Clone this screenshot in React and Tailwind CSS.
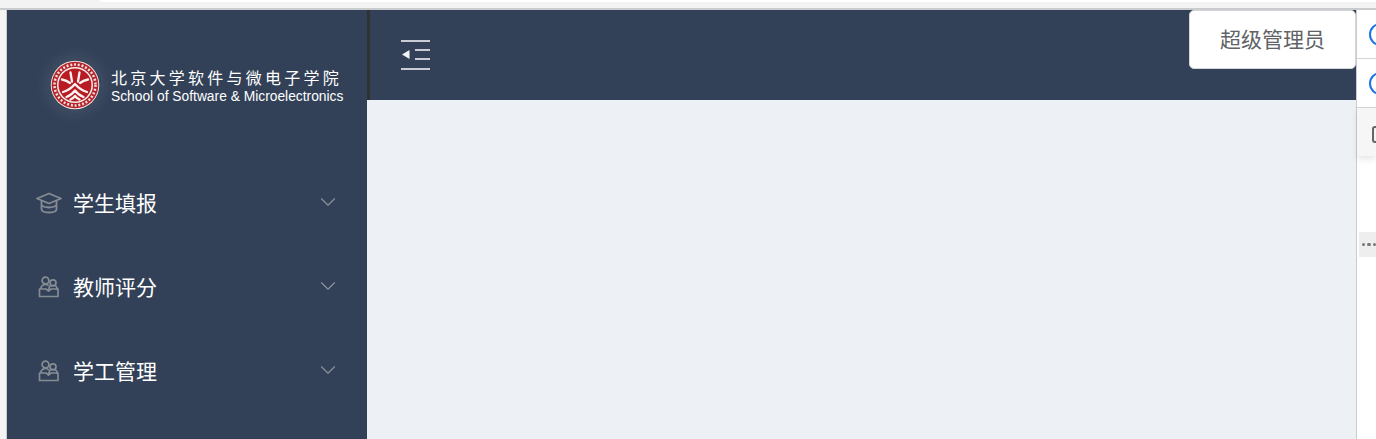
import { ChevronDown } from "lucide-react";

const MENU = [
  { label: "学生填报", icon: "cap" },
  { label: "教师评分", icon: "people" },
  { label: "学工管理", icon: "people" },
];

const CapIcon = () => (
  <svg width="26" height="22" viewBox="0 0 26 22" fill="none" stroke="#868c94" strokeWidth="1.8">
    <path d="M1 6.500 13 1.500l12 5-12 5z" strokeLinejoin="round" />
    <path d="M5.500 9v8c0 2 3 3.500 7.500 3.500s7.500-1.500 7.500-3.500V9" />
    <path d="M5.500 13.500c2 1.300 4.500 2 7.500 2s5.500-.7 7.500-2" />
  </svg>
);

const PeopleIcon = () => (
  <svg width="22" height="22" viewBox="0 0 22 22" fill="none" stroke="#868c94" strokeWidth="1.7">
    <circle cx="7.500" cy="4.500" r="3.400" />
    <circle cx="15" cy="6.800" r="3" />
    <path d="M2.500 13c.6-2.800 2.500-4.500 5-4.500 1.400 0 2.500.5 3.300 1.300" />
    <path d="M11 14v-1.500c0-1.800 1.700-3 4-3s4 1.200 4 3V14" />
    <path d="M1.500 13h6.500l2.500 2 2.500-2h7v7.500h-18.500z" strokeLinejoin="round" />
  </svg>
);

const Logo = () => (
  <svg width="50" height="50" viewBox="0 0 50 50" className="shrink-0">
    <circle cx="25" cy="25" r="24.300" fill="#f0e3e1" />
    <circle cx="25" cy="25" r="23.300" fill="#b5232a" />
    <circle cx="25" cy="25" r="20.500" fill="none" stroke="#f0dedc" strokeWidth="2.500" strokeDasharray="2 1.800" />
    <circle cx="25" cy="25" r="18" fill="#f6efee" />
    <circle cx="25" cy="25" r="16.500" fill="#b81c22" />
    <g fill="none" stroke="#f8f1f1" strokeWidth="2.300" strokeLinecap="round" strokeLinejoin="round">
      <path d="M20.500 12.500 22 21.500" />
      <path d="M29.500 12.500 28 21.500" />
      <path d="M12 19.500c3.500.6 6 1.800 8 3.500" />
      <path d="M38 19.500c-3.500.6-6 1.800-8 3.500" />
      <path d="M13 32c5-1.500 9-4.500 12-8 3 3.500 7 6.500 12 8" />
      <path d="M16.500 37c3.500-1.500 6.500-3.500 8.500-6.500 2 3 5 5 8.500 6.500" />
      <path d="M20.500 39.500c1.800-.9 3.400-2 4.500-3.500 1.100 1.500 2.700 2.600 4.500 3.500" />
    </g>
  </svg>
);

const MenuFold = () => (
  <svg width="30" height="30" viewBox="0 0 30 30" fill="#c9cdd3">
    <rect x="0" y="0" width="29" height="2" />
    <rect x="14" y="9" width="15" height="2" />
    <rect x="14" y="18" width="15" height="2" />
    <rect x="0" y="28" width="29" height="2" />
    <path d="M1 14.500 8.500 10v9z" fill="#f1f2f4" />
  </svg>
);

export default function App() {
  return (
    <div
      className="flex h-[439px] w-[1376px] flex-col overflow-hidden bg-white"
      style={{ fontFamily: '"Liberation Sans", "Noto Sans CJK SC", sans-serif' }}
    >
      {/* browser strip */}
      <div className="relative h-[10px] shrink-0 border-b-2 border-[#cacbcd] bg-[#f3f3f3]">
        <div className="absolute left-[100px] right-0 top-0 h-[2px] rounded-bl-[6px] bg-white" />
      </div>

      <div className="relative flex min-h-0 flex-1">
        <div className="w-[7px] shrink-0 border-r border-[#cacbcd] bg-[#f4f4f4]" />

        {/* sidebar */}
        <aside className="w-[360px] shrink-0 bg-[#324158]">
          <div className="flex h-[90px] items-start pl-[43px] pt-[50px]">
            <div className="flex items-center gap-[11px]">
              <div className="rounded-full shadow-[0_0_14px_5px_rgba(255,255,255,0.08)]">
                <Logo />
              </div>
              <div className="mt-[4px] text-white">
                <div className="whitespace-nowrap text-[16px] leading-[20px] tracking-[3.25px]">北京大学软件与微电子学院</div>
                <div className="whitespace-nowrap text-[13.800px] leading-[16px]">School of Software &amp; Microelectronics</div>
              </div>
            </div>
          </div>

          <nav className="pt-[61px]">
            {MENU.map((item) => (
              <div key={item.label} className="flex h-[84px] items-center pl-[29px] pr-[26px]">
                <div className="flex w-[26px] justify-center">
                  {item.icon === "cap" ? <CapIcon /> : <PeopleIcon />}
                </div>
                <span className="ml-[11px] flex-1 text-[21px] leading-none text-white">{item.label}</span>
                <ChevronDown size={26} strokeWidth={1} className="mb-[3px] text-[#8d939b]" />
              </div>
            ))}
          </nav>
        </aside>

        {/* main */}
        <main className="flex min-w-0 flex-1 flex-col bg-[#edf0f5]">
          <header className="flex h-[90px] shrink-0 items-center border-l-[3px] border-[#2f3133] bg-[#324158] pl-[31px]">
            <MenuFold />
          </header>
        </main>

        {/* clipped side panel */}
        <div className="w-[20px] shrink-0 border-l border-[#c9ccd1] bg-white">
          <div className="flex h-[49px] items-center border-b border-[#d5d5d5] pl-[12px]">
            <div className="h-[23px] w-[23px] shrink-0 rounded-full border-2 border-[#1a73e8]" />
          </div>
          <div className="flex h-[49px] items-center border-b border-[#d5d5d5] pl-[12px]">
            <div className="h-[23px] w-[23px] shrink-0 rounded-full border-2 border-[#1a73e8]" />
          </div>
          <div className="flex h-[48px] items-center bg-[#f6f6f6] pl-[15px] shadow-[0_3px_6px_rgba(0,0,0,0.1)]">
            <div className="mt-[4px] h-[17px] w-[14px] shrink-0 rounded-[3px] border-2 border-[#666]" />
          </div>
          <div className="ml-[2px] mt-[76px] flex h-[25px] items-center gap-[2px] bg-[#eeeeee] pl-[3px]">
            <span className="h-[3.500px] w-[3.500px] rounded-full bg-[#777]" />
            <span className="h-[3.500px] w-[3.500px] rounded-full bg-[#777]" />
            <span className="h-[3.500px] w-[3.500px] rounded-full bg-[#777]" />
          </div>
        </div>

        {/* user dropdown */}
        <div className="absolute left-[1189px] top-0 flex h-[59px] w-[167px] items-center justify-center rounded-[5px] border border-[#d4d6da] bg-white text-[21px] text-[#606266]">
          超级管理员
        </div>
      </div>
    </div>
  );
}
